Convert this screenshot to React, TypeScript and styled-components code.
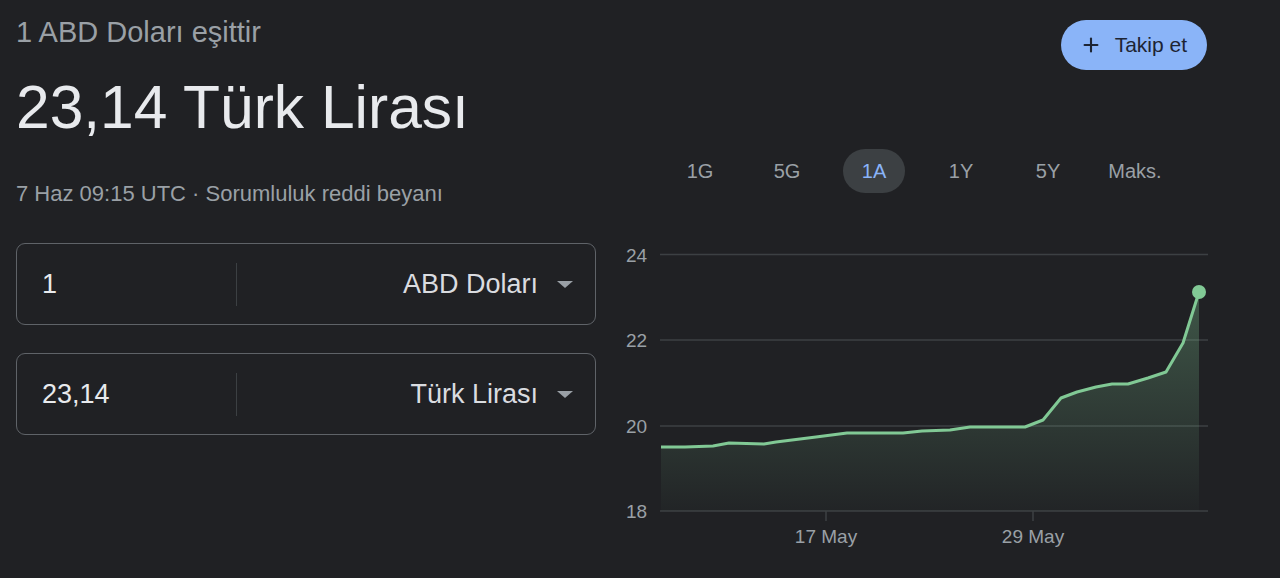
import React from "react";
import styled, { createGlobalStyle } from "styled-components";
import { Plus } from "lucide-react";

const GlobalStyle = createGlobalStyle`
  html, body {
    margin: 0;
    padding: 0;
    background: #202124;
    font-family: "Liberation Sans", Arial, sans-serif;
  }
`;

const RANGES = ["1G", "5G", "1A", "1Y", "5Y", "Maks."];

// chart points in page coordinates, shifted by the svg origin below
const ORIGIN_X = 620;
const ORIGIN_Y = 240;
const POINTS: [number, number][] = [
  [661, 447], [685, 447], [713, 446], [729, 443], [764, 444], [776, 442],
  [816, 437], [847, 433], [903, 433], [922, 431], [950, 430], [970, 427],
  [1025, 427], [1043, 420], [1061, 398], [1077, 392], [1096, 387],
  [1112, 384], [1128, 384], [1148, 378], [1166, 372], [1183, 343], [1199, 292],
];
const GRID = [
  { label: "24", y: 254.5 },
  { label: "22", y: 340 },
  { label: "20", y: 426 },
  { label: "18", y: 511 },
];
const TICKS = [
  { label: "17 May", x: 826 },
  { label: "29 May", x: 1033 },
];

const CurrencyRow = ({ value, currency }: { value: string; currency: string }) => (
  <Field>
    <Amount>{value}</Amount>
    <Divider />
    <Currency>
      {currency}
      <Caret />
    </Currency>
  </Field>
);

const RateChart = () => {
  const pts = POINTS.map(([x, y]) => [x - ORIGIN_X, y - ORIGIN_Y]);
  const line = pts.map(([x, y]) => `${x},${y}`).join(" ");
  const base = 511 - ORIGIN_Y;
  const area = `${pts[0][0]},${base} ${line} ${pts[pts.length - 1][0]},${base}`;
  const last = pts[pts.length - 1];

  return (
    <Chart width={590} height={320} viewBox="0 0 590 320">
      <defs>
        <linearGradient id="fill" x1="0" y1="0" x2="0" y2="1">
          <stop offset="0%" stopColor="#81c995" stopOpacity={0.32} />
          <stop offset="100%" stopColor="#81c995" stopOpacity={0.02} />
        </linearGradient>
      </defs>
      {GRID.map((g) => (
        <g key={g.label}>
          <line x1={40} x2={588} y1={g.y - ORIGIN_Y} y2={g.y - ORIGIN_Y} stroke="#3c4043" strokeWidth={1.5} />
          <text x={6} y={g.y - ORIGIN_Y + 7} fill="#9aa0a6" fontSize={19}>
            {g.label}
          </text>
        </g>
      ))}
      <polygon points={area} fill="url(#fill)" />
      <polyline points={line} fill="none" stroke="#81c995" strokeWidth={3} strokeLinejoin="round" />
      <circle cx={last[0]} cy={last[1]} r={7} fill="#81c995" />
      {TICKS.map((t) => (
        <g key={t.label}>
          <line x1={t.x - ORIGIN_X} x2={t.x - ORIGIN_X} y1={base} y2={base + 10} stroke="#3c4043" strokeWidth={1.5} />
          <text x={t.x - ORIGIN_X} y={536 - ORIGIN_Y + 7} fill="#9aa0a6" fontSize={19} textAnchor="middle">
            {t.label}
          </text>
        </g>
      ))}
    </Chart>
  );
};

const App = () => {
  return (
    <>
      <GlobalStyle />
      <Page>
        <Left>
          <Subtitle>1 ABD Doları eşittir</Subtitle>
          <Result>23,14 Türk Lirası</Result>
          <Meta>7 Haz 09:15 UTC · Sorumluluk reddi beyanı</Meta>
          <Fields>
            <CurrencyRow value="1" currency="ABD Doları" />
            <CurrencyRow value="23,14" currency="Türk Lirası" />
          </Fields>
        </Left>
        <Right>
          <Header>
            <FollowButton>
              <Plus size={22} strokeWidth={2.3} />
              Takip et
            </FollowButton>
          </Header>
          <Tabs>
            {RANGES.map((r) => (
              <Tab key={r} $active={r === "1A"}>
                {r}
              </Tab>
            ))}
          </Tabs>
          <RateChart />
        </Right>
      </Page>
    </>
  );
};

const Page = styled.div`
  display: flex;
  padding: 0 16px;
  height: 578px;
  box-sizing: border-box;
  overflow: hidden;
`;

const Left = styled.div`
  width: 580px;
  padding-top: 16px;
  display: flex;
  flex-direction: column;
`;

const Subtitle = styled.div`
  font-size: 29px;
  line-height: 33px;
  color: #9aa0a6;
`;

const Result = styled.div`
  margin-top: 24px;
  font-size: 60.5px;
  line-height: 69px;
  color: #e8eaed;
`;

const Meta = styled.div`
  margin-top: 40px;
  font-size: 22px;
  line-height: 24px;
  color: #9aa0a6;
`;

const Fields = styled.div`
  margin-top: 37px;
  display: flex;
  flex-direction: column;
  gap: 28px;
`;

const Field = styled.div`
  height: 82px;
  box-sizing: border-box;
  border: 1px solid #5f6368;
  border-radius: 9px;
  display: flex;
  align-items: center;
`;

const Amount = styled.div`
  width: 219px;
  box-sizing: border-box;
  padding-left: 25px;
  font-size: 27px;
  color: #e8eaed;
`;

const Divider = styled.div`
  width: 1px;
  height: 43px;
  background: #3c4043;
`;

const Currency = styled.div`
  flex: 1;
  display: flex;
  align-items: center;
  justify-content: flex-end;
  gap: 19px;
  padding-right: 22px;
  font-size: 27px;
  color: #dadce0;
`;

const Caret = styled.span`
  width: 0;
  height: 0;
  border-left: 8px solid transparent;
  border-right: 8px solid transparent;
  border-top: 7px solid #9aa0a6;
`;

const Right = styled.div`
  margin-left: 24px;
  width: 590px;
  display: flex;
  flex-direction: column;
  padding-top: 20px;
`;

const Header = styled.div`
  display: flex;
  justify-content: flex-end;
  padding-right: 3px;
`;

const FollowButton = styled.button`
  height: 50px;
  padding: 0 20px 0 19px;
  display: flex;
  align-items: center;
  gap: 13px;
  border: none;
  border-radius: 25px;
  background: #8ab4f8;
  color: #1d2433;
  font-family: "Liberation Sans", Arial, sans-serif;
  font-size: 21px;
`;

const Tabs = styled.div`
  margin-top: 79px;
  margin-left: 49px;
  display: flex;
  gap: 25px;
`;

const Tab = styled.div<{ $active?: boolean }>`
  width: 62px;
  height: 44px;
  border-radius: 22px;
  display: flex;
  align-items: center;
  justify-content: center;
  font-size: 20px;
  color: ${(p) => (p.$active ? "#8ab4f8" : "#9aa0a6")};
  background: ${(p) => (p.$active ? "#3c4043" : "transparent")};
`;

const Chart = styled.svg`
  margin-top: 47px;
  display: block;
  font-family: "Liberation Sans", Arial, sans-serif;
`;

export default App;
